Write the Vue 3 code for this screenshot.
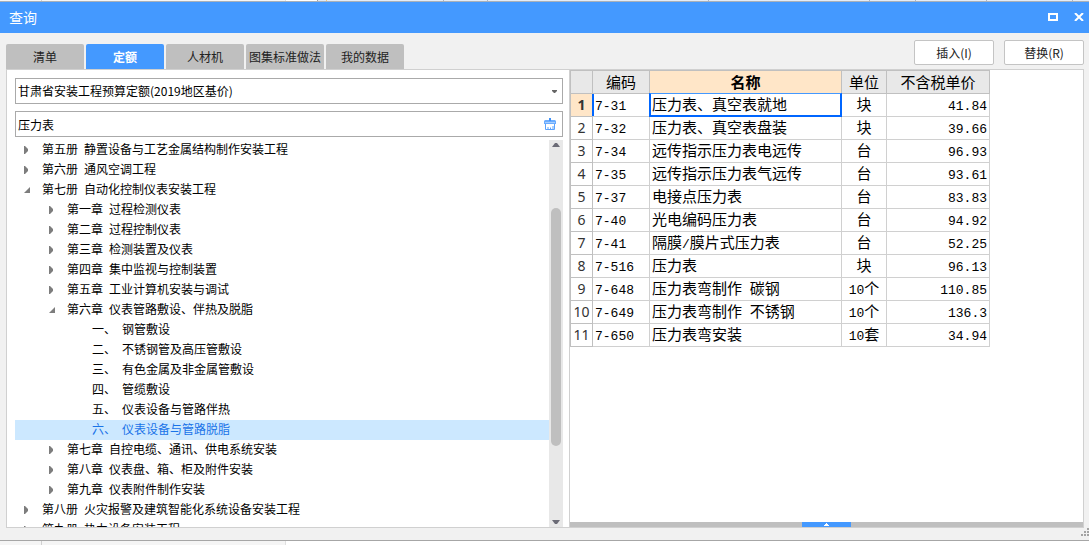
<script setup>
import { ref } from 'vue'

const tabs = ['清单', '定额', '人材机', '图集标准做法', '我的数据']
const activeTab = ref(1)
const keyword = ref('压力表')

const tree = [
  { level: 0, state: 'closed', text: '第五册 静置设备与工艺金属结构制作安装工程' },
  { level: 0, state: 'closed', text: '第六册 通风空调工程' },
  { level: 0, state: 'open', text: '第七册 自动化控制仪表安装工程' },
  { level: 1, state: 'closed', text: '第一章 过程检测仪表' },
  { level: 1, state: 'closed', text: '第二章 过程控制仪表' },
  { level: 1, state: 'closed', text: '第三章 检测装置及仪表' },
  { level: 1, state: 'closed', text: '第四章 集中监视与控制装置' },
  { level: 1, state: 'closed', text: '第五章 工业计算机安装与调试' },
  { level: 1, state: 'open', text: '第六章 仪表管路敷设、伴热及脱脂' },
  { level: 2, state: 'leaf', text: '一、 钢管敷设' },
  { level: 2, state: 'leaf', text: '二、 不锈钢管及高压管敷设' },
  { level: 2, state: 'leaf', text: '三、 有色金属及非金属管敷设' },
  { level: 2, state: 'leaf', text: '四、 管缆敷设' },
  { level: 2, state: 'leaf', text: '五、 仪表设备与管路伴热' },
  { level: 2, state: 'leaf', text: '六、 仪表设备与管路脱脂', selected: true },
  { level: 1, state: 'closed', text: '第七章 自控电缆、通讯、供电系统安装' },
  { level: 1, state: 'closed', text: '第八章 仪表盘、箱、柜及附件安装' },
  { level: 1, state: 'closed', text: '第九章 仪表附件制作安装' },
  { level: 0, state: 'closed', text: '第八册 火灾报警及建筑智能化系统设备安装工程' },
  { level: 0, state: 'closed', text: '第九册 热力设备安装工程' }
]

const rows = [
  ['7-31', '压力表、真空表就地', '块', '41.84'],
  ['7-32', '压力表、真空表盘装', '块', '39.66'],
  ['7-34', '远传指示压力表电远传', '台', '96.93'],
  ['7-35', '远传指示压力表气远传', '台', '93.61'],
  ['7-37', '电接点压力表', '台', '83.83'],
  ['7-40', '光电编码压力表', '台', '94.92'],
  ['7-41', '隔膜/膜片式压力表', '台', '52.25'],
  ['7-516', '压力表', '块', '96.13'],
  ['7-648', '压力表弯制作 碳钢', '10个', '110.85'],
  ['7-649', '压力表弯制作 不锈钢', '10个', '136.3'],
  ['7-650', '压力表弯安装', '10套', '34.94']
]

// Latin runs are set in a half-width face beside the full-width characters.
const runs = (text) =>
  text.match(/[\x20-\x7e]+|[^\x20-\x7e]+/g).map((t) => ({ t, latin: t.charCodeAt(0) < 128 }))

// Column widths of the sheet that shows above the dialog.
const sheetColumns = [117, 44, 221, 161, 46, 71, 86]
</script>

<template>
  <div class="screen">
    <div class="behind top">
      <i class="a"></i><i class="b"></i><i class="gap"></i><i class="mark"></i>
      <i v-for="(w, i) in sheetColumns" :key="i" class="col" :style="{ width: w + 'px' }"></i>
      <i class="c"></i>
    </div>
    <main class="window">
      <header class="titlebar">
        <h1>查询</h1>
        <div class="controls">
          <button type="button" aria-label="最大化">
            <svg width="10" height="8" viewBox="0 0 10 8"><path d="M1 1h8v6H1z" fill="none" stroke="#fff" stroke-width="2" /></svg>
          </button>
          <button type="button" aria-label="关闭">
            <svg width="10" height="8" viewBox="0 0 10 8"><path d="M1 0l8 8M9 0L1 8" fill="none" stroke="#fff" stroke-width="2" /></svg>
          </button>
        </div>
      </header>

      <div class="toolbar">
        <nav class="tabs">
          <button
            v-for="(tab, i) in tabs"
            :key="tab"
            type="button"
            class="tab"
            :class="{ active: i === activeTab }"
            @click="activeTab = i"
          >{{ tab }}</button>
        </nav>
        <div class="actions">
          <button type="button">插入(I)</button>
          <button type="button">替换(R)</button>
        </div>
      </div>

      <div class="panes">
        <section class="left">
          <div class="field">
            <select aria-label="定额库">
              <option>甘肃省安装工程预算定额(2019地区基价)</option>
            </select>
            <svg class="caret" width="5" height="3" viewBox="0 0 5 3"><path d="M0 0h5v1L3 3H2L0 1z" fill="#666" /></svg>
          </div>
          <div class="field">
            <input v-model="keyword" type="text" aria-label="关键字" />
            <button type="button" class="clear" aria-label="清除" @click="keyword = ''">
              <svg width="12" height="12" viewBox="0 0 12 12">
                <path d="M5 0h2v2h4l1 1v3H0V3l1-1h4z" fill="#6aacff" />
                <path d="M5 0h2v3H5z" fill="#3f92fa" />
                <path d="M1 4.500h10" stroke="#a6ceff" />
                <path d="M1.500 6v5.500h9V6M4 11V9M6.500 11V9.500M9 11V8" fill="none" stroke="#5ba2fc" />
              </svg>
            </button>
          </div>
          <div class="treebox">
            <ul class="tree">
              <li
                v-for="node in tree"
                :key="node.text"
                :class="['level' + node.level, { selected: node.selected }]"
              >
                <svg class="twist" width="7" height="8" viewBox="0 0 7 8">
                  <path v-if="node.state === 'closed'" d="M0 0h1l3 3v2L1 8H0z" fill="#7d7d7d" />
                  <path v-if="node.state === 'open'" d="M6 1v6H0z" fill="#7d7d7d" />
                </svg>
                <span class="label"><span v-for="(r, k) in runs(node.text)" :key="k" :class="{ latin: r.latin }">{{ r.t }}</span></span>
              </li>
            </ul>
            <div class="scrollbar">
              <svg width="8" height="4" viewBox="0 0 8 4"><path d="M3 0h2l3 4H0z" fill="#6b6b76" /></svg>
              <div class="track"><div class="thumb"></div></div>
              <svg width="8" height="4" viewBox="0 0 8 4"><path d="M0 0h8L5 4H3z" fill="#6b6b76" /></svg>
            </div>
          </div>
        </section>

        <section class="right">
          <div class="gridbox">
            <table>
              <colgroup>
                <col class="c-no" /><col class="c-code" /><col class="c-name" /><col class="c-unit" /><col class="c-price" />
              </colgroup>
              <thead>
                <tr><th></th><th>编码</th><th class="current">名称</th><th>单位</th><th>不含税单价</th></tr>
              </thead>
              <tbody>
                <tr v-for="(row, i) in rows" :key="row[0]" :class="{ active: i === 0 }">
                  <th scope="row">{{ i + 1 }}</th>
                  <td v-for="(cell, j) in row" :key="j" :class="['code', 'name', 'unit', 'price'][j]"><span v-for="(r, k) in runs(cell)" :key="k" :class="{ latin: r.latin }">{{ r.t }}</span></td>
                </tr>
              </tbody>
            </table>
          </div>
          <div class="splitter">
            <button type="button" aria-label="展开">
              <svg width="5" height="3" viewBox="0 0 5 3"><path d="M2 0h1v1h1v1h1v1H0V2h1V1h1z" fill="#fff" /></svg>
            </button>
          </div>
        </section>
      </div>

      <footer class="bottom">
        <svg width="8" height="8" viewBox="0 0 8 8"><path d="M6 0h2v2H6zM3 3h2v2H3zM6 3h2v2H6zM0 6h2v2H0zM3 6h2v2H3zM6 6h2v2H6z" fill="#a3a3a3" /></svg>
      </footer>
    </main>
    <div class="behind under"><i class="a"></i><i class="b"></i><i class="c"></i></div>
  </div>
</template>

<style>
body {
  margin: 0;
}
</style>

<style scoped>
* {
  box-sizing: border-box;
}
.screen {
  display: flex;
  flex-direction: column;
  height: 100vh;
  overflow: hidden;
  font: 12px/20px "Noto Sans CJK SC", sans-serif;
  color: #000;
}
button,
input,
select {
  margin: 0;
  padding: 0;
  border: 0;
  font: inherit;
  color: inherit;
  background: none;
  border-radius: 0;
}
svg {
  display: block;
  flex: none;
}
.behind {
  display: flex;
  flex: none;
  background: #f5f5f5;
}
.behind .a {
  width: 42px;
  border-right: 1px solid #d0d0d0;
}
.behind .b {
  width: 244px;
  border-right: 1px solid #e0e0e0;
}
.behind .c {
  flex: 1;
  background: #fff;
}
.top {
  height: 1px;
}
.top .gap {
  width: 32px;
  background: #fff;
  border-right: 1px solid #a0a0a0;
}
.top .mark {
  width: 9px;
  background: #dfe8f5;
  border-right: 1px solid #f5c878;
}
.top .col {
  flex: none;
  background: #e4ebf5;
  border-right: 1px solid #a9b4c4;
}
.top .c {
  background: #e4ebf5;
}
.under {
  height: 4px;
}
.window {
  flex: 1;
  min-height: 0;
  display: flex;
  flex-direction: column;
  background: #f1f1f1;
  border-top: 1px solid #a9b0b8;
  border-bottom: 1px solid #a6a6a6;
}
.titlebar {
  display: flex;
  align-items: center;
  justify-content: space-between;
  height: 31px;
  flex: none;
  padding: 0 5px 2px 9px;
  background: #4499ff;
  color: #fff;
}
h1 {
  margin: 0;
  font-size: 14px;
  font-weight: 400;
}
.controls {
  display: flex;
  gap: 16px;
}
.toolbar {
  display: flex;
  align-items: flex-end;
  justify-content: space-between;
  flex: none;
  height: 36px;
  padding: 0 5px 0 6px;
}
.tabs {
  display: flex;
  gap: 2px;
}
.tab {
  width: 78px;
  height: 25px;
  background: #bfbfbf;
  border-radius: 2px 2px 0 0;
  color: #222;
  white-space: nowrap;
}
.tab.active {
  background: #4499ff;
  color: #fff;
  font-weight: 700;
}
.actions {
  display: flex;
  gap: 10px;
  padding-bottom: 4px;
}
.actions button {
  width: 80px;
  height: 25px;
  border: 1px solid #c4c4c4;
  border-radius: 2px;
  background: #fff;
  color: #222;
}
.panes {
  flex: 1;
  min-height: 0;
  display: grid;
  grid-template-columns: minmax(0, 563fr) minmax(0, 513fr);
  grid-template-rows: minmax(0, 1fr);
  margin: 0 5px 0 6px;
  border: 1px solid #d0d0d0;
  background: #fff;
}
.left {
  display: flex;
  flex-direction: column;
  min-height: 0;
  padding: 8px 6px 0 8px;
  border-right: 1px solid #d0d0d0;
}
.field {
  display: flex;
  align-items: center;
  position: relative;
  flex: none;
  height: 26px;
  margin-bottom: 7px;
  border: 1px solid #aaa;
}
.field + .field {
  margin-bottom: 3px;
}
.field select,
.field input {
  flex: 1;
  min-width: 0;
  height: 24px;
  padding: 0 2px;
  appearance: none;
  outline: none;
}
.caret {
  position: absolute;
  right: 5px;
  top: 11px;
  pointer-events: none;
}
.clear {
  padding-right: 6px;
}
.treebox {
  flex: 1;
  min-height: 0;
  display: flex;
}
.tree {
  flex: 1;
  min-width: 0;
  margin: 0;
  padding: 0;
  list-style: none;
  overflow: hidden;
}
.tree li {
  display: flex;
  align-items: center;
  height: 20px;
  padding-left: 9px;
  white-space: pre;
}
.tree li.level1 {
  padding-left: 34px;
}
.tree li.level2 {
  padding-left: 59px;
}
.tree li.selected {
  background: #cce8ff;
  color: #1a73e8;
}
.label {
  padding: 0 0 2px 11px;
  line-height: 18px;
}
.tree .latin {
  font: 10px/12px "Liberation Mono", monospace;
}
.scrollbar {
  display: flex;
  flex-direction: column;
  align-items: center;
  flex: none;
  width: 14px;
  padding: 3px 0;
  background: #e8e8e8;
}
.track {
  flex: 1;
  display: flex;
  flex-direction: column;
  width: 10px;
}
.track::before {
  content: "";
  flex: 61;
}
.thumb {
  flex: 238;
  background: #bfbfbf;
  border-radius: 5px;
}
.track::after {
  content: "";
  flex: 74;
}
.right {
  display: flex;
  flex-direction: column;
  min-width: 0;
  min-height: 0;
}
.gridbox {
  flex: 1;
  min-height: 0;
  overflow: hidden;
}
table {
  border-collapse: separate;
  border-spacing: 0;
  table-layout: fixed;
  width: 420px;
  border-top: 1px solid #c0c0c0;
  border-left: 1px solid #c0c0c0;
  font-size: 15px;
  line-height: 20px;
}
.c-no { width: 22px; }
.c-code { width: 57px; }
.c-name { width: 192px; }
.c-unit { width: 45px; }
.c-price { width: 103px; }
th,
td {
  height: 23px;
  padding: 0;
  border-right: 1px solid #d0d0d0;
  border-bottom: 1px solid #d0d0d0;
  white-space: pre;
  font-weight: 400;
}
thead th {
  background: #e8e8e8;
  border-color: #c0c0c0;
}
thead th.current {
  background: #ffe6c8;
  font-weight: 700;
}
tbody th {
  border-color: #c0c0c0;
  color: #333;
  font: 14px/20px "Noto Sans", sans-serif;
}
.active th {
  background: #ffe6c8;
  font-weight: 700;
}
td {
  position: relative;
}
tbody td {
  padding-bottom: 2px;
}
.code {
  padding-left: 2px;
}
.name {
  padding-left: 2px;
}
.unit {
  text-align: center;
}
.price {
  text-align: right;
  padding-right: 2px;
}
td .latin {
  font: 13px/13px "Liberation Mono", monospace;
}
.active .code::before {
  content: "";
  position: absolute;
  inset: 0 auto 0 -1px;
  width: 2px;
  background: #0066ff;
}
.active .name::before {
  content: "";
  position: absolute;
  inset: -1px -1px -1px -1px;
  border: 2px solid #0066ff;
  border-top: 1px solid #4499ff;
  z-index: 1;
}
.splitter {
  display: flex;
  justify-content: center;
  flex: none;
  height: 5px;
  background: #bfbfbf;
}
.splitter button {
  display: flex;
  align-items: center;
  justify-content: center;
  width: 49px;
  height: 5px;
  background: #4499ff;
}
.bottom {
  display: flex;
  justify-content: flex-end;
  align-items: flex-end;
  flex: none;
  height: 12px;
  padding-bottom: 4px;
}
</style>
